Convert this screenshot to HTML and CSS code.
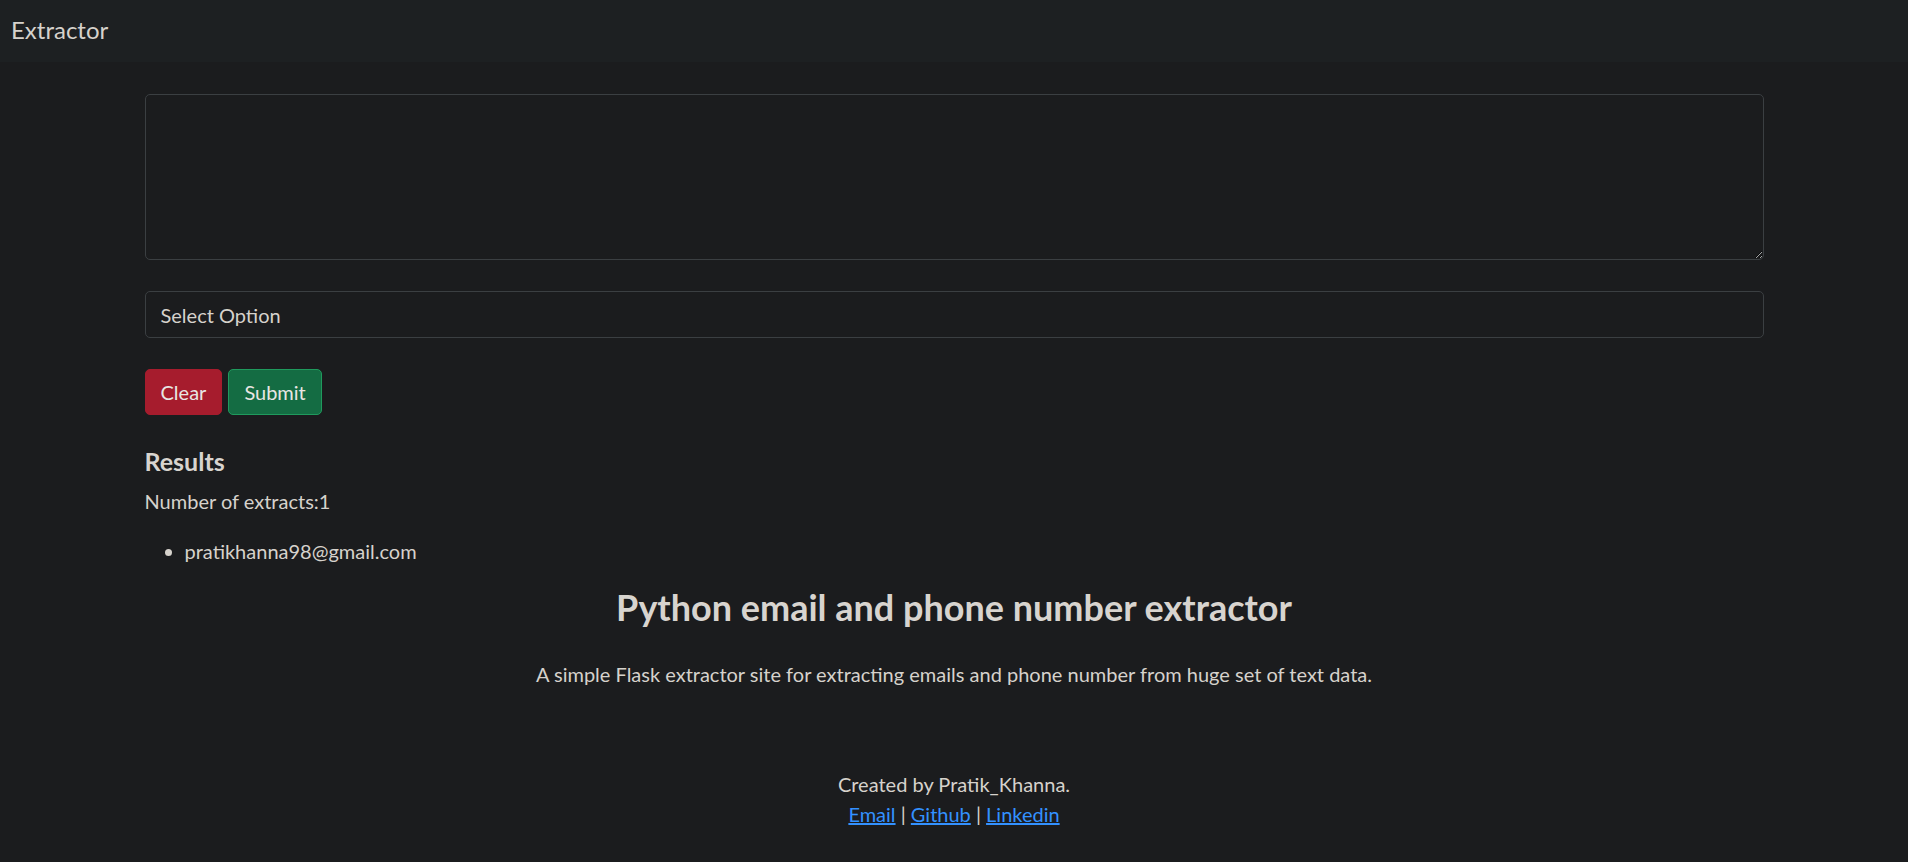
FILE: index.html
```html
<!DOCTYPE html>
<html lang="en">
<head>
<meta charset="utf-8">
<title>Extractor</title>
<link rel="stylesheet" href="styles.css">
</head>
<body>
<nav class="navbar">
  <a class="brand" href="#">Extractor</a>
</nav>
<main class="container">
  <form class="form">
    <textarea class="text-input" rows="5"></textarea>
    <div class="select">Select Option</div>
    <div class="actions">
      <button type="button" class="btn btn-danger">Clear</button>
      <button type="button" class="btn btn-success">Submit</button>
    </div>
  </form>
  <section class="results">
    <h5 class="results-title">Results</h5>
    <p class="count">Number of extracts:1</p>
    <ul class="list">
      <li>pratikhanna98@gmail.com</li>
    </ul>
  </section>
  <section class="about">
    <h3 class="about-title">Python email and phone number extractor</h3>
    <p class="about-text">A simple Flask extractor site for extracting emails and phone number from huge set of text data.</p>
  </section>
</main>
<footer class="footer">
  <div>Created by Pratik_Khanna.</div>
  <div><a href="#">Email</a> | <a href="#">Github</a> | <a href="#">Linkedin</a></div>
</footer>
</body>
</html>
```

FILE: styles.css
```css
* { box-sizing: border-box; }

html, body {
  margin: 0;
  padding: 0;
}

body {
  background: #1b1c1e;
  color: #d6d2cc;
  font-family: Lato, "Open Sans", sans-serif;
  font-size: 20px;
  line-height: 30px;
  height: 862px;
  overflow: hidden;
}

.navbar {
  height: 62px;
  background: #1d2022;
  display: flex;
  align-items: center;
  padding: 0 11px;
}

.brand {
  color: #d6d2cc;
  text-decoration: none;
  font-size: 24px;
  line-height: 37px;
  margin-top: -3px;
}

.container {
  width: 1619px;
  margin: 0 auto;
  padding-top: 32px;
}

.form {
  display: flex;
  flex-direction: column;
}

.text-input {
  display: block;
  width: 100%;
  height: 166px;
  background: #1b1c1e;
  border: 1px solid #3b3f42;
  border-radius: 5px;
  color: #d6d2cc;
  font: inherit;
  padding: 7px 15px;
  margin: 0;
  resize: vertical;
  outline: none;
}

.select {
  margin-top: 31px;
  height: 47px;
  border: 1px solid #3b3f42;
  border-radius: 5px;
  padding: 0 15px;
  display: flex;
  align-items: center;
  color: #d6d2cc;
}

.actions {
  margin-top: 31px;
  display: flex;
  gap: 6px;
}

.btn {
  font: inherit;
  height: 46px;
  padding: 0 15px;
  border-radius: 5px;
  border: 1px solid transparent;
  color: #e8e6e3;
  cursor: pointer;
}

.btn-danger {
  background: #a61c2d;
  border-color: #a61c2d;
}

.btn-success {
  background: #146c43;
  border-color: #1f9a5d;
}

.results {
  margin-top: 31px;
}

.results-title {
  margin: 0 0 10px;
  font-size: 25px;
  line-height: 30px;
  font-weight: 700;
  color: #d8d4cf;
}

.count {
  margin: 0 0 20px;
}

.list {
  margin: 0 0 20px;
  padding-left: 40px;
}

.about {
  text-align: center;
}

.about-title {
  margin: 0 0 31px;
  font-size: 36px;
  line-height: 42px;
  font-weight: 700;
  color: #d8d4cf;
}

.about-text {
  margin: 0;
}

.footer {
  margin-top: 80px;
  text-align: center;
}

.footer a {
  color: #3391ff;
}
```
